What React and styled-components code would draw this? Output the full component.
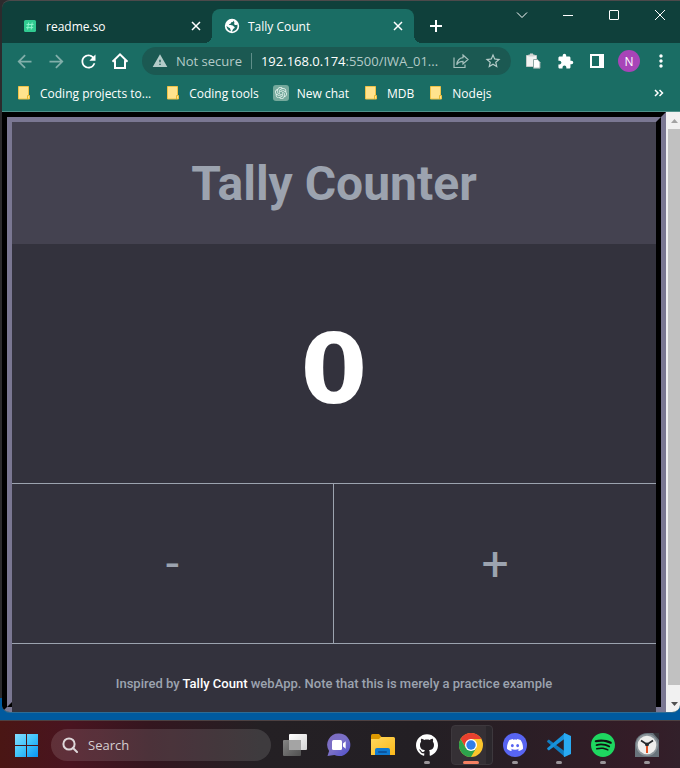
import React, { useState } from "react";
import styled, { createGlobalStyle } from "styled-components";
import {
  MdArrowBack,
  MdArrowForward,
  MdExtension,
  MdMoreVert,
  MdRefresh,
  MdStarBorder,
  MdWarning,
} from "react-icons/md";
import { SiDiscord, SiGithub, SiOpenai, SiSpotify } from "react-icons/si";

const UI_FONT = '"Open Sans", "Noto Sans", sans-serif';
const PAGE_FONT = 'Roboto, "Liberation Sans", sans-serif';

const GlobalStyle = createGlobalStyle`
  *, *::before, *::after { box-sizing: border-box; }
  html, body { margin: 0; height: 100%; overflow: hidden; }
  button, input { font: inherit; color: inherit; background: none; border: 0; padding: 0; margin: 0; }
  svg { display: block; flex: none; }
`;

const Desktop = styled.div`
  display: flex;
  flex-direction: column;
  height: 100vh;
  padding-left: 2px;
  background: linear-gradient(#2c2b2d 0 698px, #005a9e 698px);
  font-family: ${UI_FONT};
`;

const Window = styled.div`
  flex: 1;
  min-height: 0;
  display: flex;
  flex-direction: column;
  margin-bottom: 7px;
  border-top: 1px solid #4c4a4b;
  border-bottom: 1px solid #2d6c94;
  border-radius: 8px 0 8px 8px;
  overflow: hidden;
  background: #0f403b;
  color: #fff;
  font-size: 12px;
`;

/* Tab strip */
const TabStrip = styled.header`
  flex: none;
  display: flex;
  align-items: flex-end;
  height: 42px;
  padding-left: 8px;
`;

const Tab = styled.div`
  position: relative;
  display: flex;
  align-items: center;
  gap: 8px;
  width: 202px;
  height: 34px;
  padding: 0 8px 0 12px;
  border-radius: 8px 8px 0 0;
  background: ${(p) => (p.$active ? "#1a6d64" : "transparent")};

  &::before, &::after {
    content: ${(p) => (p.$active ? '""' : "none")};
    position: absolute;
    bottom: 0;
    width: 8px;
    height: 8px;
  }
  &::before { left: -8px; background: radial-gradient(circle at 0 0, transparent 8px, #1a6d64 8px); }
  &::after { right: -8px; background: radial-gradient(circle at 100% 0, transparent 8px, #1a6d64 8px); }
`;

const TabTitle = styled.span`
  flex: 1;
  white-space: nowrap;
`;

const IconButton = styled.button`
  flex: none;
  display: grid;
  place-items: center;
  width: ${(p) => p.$size || 24}px;
  height: ${(p) => p.$size || 24}px;
  opacity: ${(p) => (p.$dim ? 0.45 : 1)};
`;

const NewTab = styled(IconButton)`
  margin: 0 0 5px 10px;
`;

const WindowControls = styled.div`
  display: flex;
  gap: 6px;
  align-self: flex-start;
  margin-left: auto;
`;

const WindowButton = styled.button`
  display: grid;
  place-items: center;
  width: 40px;
  height: 28px;
`;

/* Toolbar */
const Toolbar = styled.nav`
  flex: none;
  display: flex;
  align-items: center;
  gap: 8px;
  height: 36px;
  padding: 0 7px 0 10px;
  background: #1a6d64;
`;

const Omnibox = styled.div`
  flex: 1;
  min-width: 0;
  display: flex;
  align-items: center;
  height: 28px;
  margin: 0 2px;
  padding: 0 6px 0 10px;
  border-radius: 14px;
  background: #1b5952;
  color: #b4cbc8;
  font-size: 13px;
`;

const Security = styled.span`
  margin-left: 8px;
  padding-right: 9px;
  border-right: 1px solid #5f8e89;
  line-height: 16px;
  white-space: nowrap;
`;

const Host = styled.label`
  padding-left: 9px;
  color: #fff;
`;

const Address = styled.input`
  flex: 1;
  min-width: 0;
  outline: 0;
  text-overflow: ellipsis;
`;

const OmniActions = styled.div`
  display: flex;
  gap: 8px;
`;

const Avatar = styled.button`
  flex: none;
  width: 22px;
  height: 22px;
  margin: 0 1px;
  border-radius: 50%;
  background: #a844b8;
  font-size: 12px;
`;

/* Bookmarks */
const Bookmarks = styled.nav`
  flex: none;
  display: flex;
  align-items: center;
  gap: 14px;
  height: 33px;
  padding: 0 9px 4px 14px;
  border-bottom: 1px solid #4f918a;
  background: #1a6d64;
`;

const Bookmark = styled.a`
  display: flex;
  align-items: center;
  gap: 8px;
  color: #fff;
  text-decoration: none;
  white-space: nowrap;
`;

const ChatBadge = styled.span`
  display: grid;
  place-items: center;
  width: 16px;
  height: 16px;
  border-radius: 3px;
  background: #75a99c;
`;

const Overflow = styled(IconButton)`
  margin-left: auto;
`;

/* Page */
const Viewport = styled.div`
  flex: 1;
  min-height: 0;
  display: flex;
`;

const OuterBevel = styled.main`
  flex: 1;
  min-width: 0;
  display: flex;
  border: 5px solid;
  border-color: #000 #7a7792 #7a7792 #000;
  font-family: ${PAGE_FONT};
  color: #9ca3af;
`;

const InnerBevel = styled.div`
  flex: 1;
  display: flex;
  border: 5px solid;
  border-color: #7a7792 #000 #000 #7a7792;
`;

const Counter = styled.div`
  flex: 1;
  display: flex;
  flex-direction: column;
  margin-bottom: -10px;
  background: #33323d;
`;

const Title = styled.h1`
  flex: none;
  margin: 0;
  padding: 34px 0 32px;
  background: #444250;
  font-size: 48px;
  line-height: 56px;
  font-weight: 700;
  text-align: center;
`;

const Value = styled.output`
  flex: 1;
  display: grid;
  place-items: center;
  padding-top: 12px;
  color: #fff;
  font-family: "DejaVu Sans", sans-serif;
  font-size: 96px;
  line-height: 112px;
  font-weight: 700;
`;

const Controls = styled.div`
  flex: none;
  display: grid;
  grid-template-columns: 1fr 1fr;
  height: 161px;
  border: solid #9ca3af;
  border-width: 1px 0;
`;

const Step = styled.button`
  font-size: 48px;
  line-height: 56px;

  &:first-child { border-right: 1px solid #9ca3af; }
`;

const Footnote = styled.footer`
  flex: none;
  padding: 30px 0 18px;
  font-size: 13px;
  line-height: 20px;
  font-weight: 500;
  text-align: center;

  a { color: #fff; text-decoration: none; }
`;

const ScrollTrack = styled.div`
  flex: none;
  display: flex;
  flex-direction: column;
  width: 14px;
  padding-left: 2px;
  background: #f1f1f1;
`;

const ScrollArrow = styled.button`
  display: grid;
  place-items: center;
  height: 17px;
`;

const ScrollThumb = styled.div`
  flex: 1;
  margin-bottom: 10px;
  background: #c1c1c1;
`;

/* Taskbar */
const Taskbar = styled.footer`
  flex: none;
  display: flex;
  align-items: center;
  height: 48px;
  margin-left: -2px;
  padding-left: 14px;
  border-top: 1px solid #4d4142;
  overflow: hidden;
  background: linear-gradient(90deg, #4a1614 0, #491420 70px, #34161f 150px, #242024 260px, #231f24 420px, #2a1e25 520px, #341c27 640px, #32202a 100%);
`;

const SearchBox = styled.label`
  flex: 1;
  display: flex;
  align-items: center;
  gap: 10px;
  height: 32px;
  margin: 0 2px 0 13px;
  padding-left: 11px;
  border-radius: 16px;
  background: rgba(255, 255, 255, 0.12);
  color: #d5ced0;
  font-size: 13px;

  input { flex: 1; min-width: 0; outline: 0; }
  input::placeholder { color: #d5ced0; opacity: 1; }
`;

const Apps = styled.div`
  flex: none;
  display: flex;
  padding-right: 11px;
`;

const AppButton = styled.button`
  position: relative;
  display: grid;
  place-items: center;
  width: 44px;
  height: 40px;

  &::before {
    content: ${(p) => (p.$active ? '""' : "none")};
    position: absolute;
    inset: 0 0 0 2px;
    border: 1px solid #3d383d;
    border-radius: 4px;
    background: linear-gradient(90deg, #353035 34px, #2b272c 34px);
  }
  &::after {
    content: ${(p) => (p.$running ? '""' : "none")};
    position: absolute;
    bottom: 1px;
    left: calc(50% - ${(p) => (p.$active ? 8 : 3)}px);
    width: ${(p) => (p.$active ? 16 : 6)}px;
    height: 3px;
    border-radius: 2px;
    background: ${(p) => (p.$active ? "#f58062" : "#9a9599")};
  }
  svg { position: relative; }
`;

const Line = ({ d, size = 12, width = 1 }) => (
  <svg width={size} height={size} viewBox={`0 0 ${size} ${size}`} fill="none" stroke="currentColor" strokeWidth={width}>
    <path d={d} />
  </svg>
);

const CloseGlyph = () => <Line size={10} width={1.5} d="M1 1l8 8M9 1l-8 8" />;

const ReadmeIcon = () => (
  <svg width="16" height="16" viewBox="0 0 16 16">
    <rect x="2" y="2" width="12" height="12" rx="1.500" fill="#31cb91" />
    <path d="M6.600 4.500l-1 7M10.200 4.500l-1 7M4.500 6.500h7M4.200 9.600h7" stroke="#8cf5cb" fill="none" />
  </svg>
);

const GlobeIcon = () => (
  <svg width="16" height="16" viewBox="0 0 16 16">
    <circle cx="8" cy="8" r="7.200" fill="#fff" />
    <path
      d="M9.600 2.500C9.200 4 8.100 4.100 7.200 4.300c-.5.500-.2 1.300-1 1.700-.6.300-1.200.3-1.200 1 2 .3 3.700-.2 4.400 1 .4.800 1.400.6 1.300 1.500-.2 1-1.300.9-1.700 1.700-.3.700-.5 1.500-1.200 2.300 3 .2 5.700-2.200 5.700-5.500 0-.5-.1-1-.2-1.500-1 .7-2.200.8-2.900 0-.7-.9.300-1.700-.1-2.400-.3-.5-.7-.9-.7-1.600zM2.500 7.800c0 2.500 1.800 4.800 4.200 5.400.3-1-.4-1.700-.5-2.500-.1-1-.9-1-1.600-1.300-.9-.4-1.400-.8-2.100-1.600z"
      fill="#1a6d64"
    />
  </svg>
);

const HomeIcon = () => (
  <svg width="18" height="18" viewBox="0 0 18 18" fill="none" stroke="currentColor" strokeWidth="2">
    <path d="M1.500 9.700L9 2.400l7.500 7.300M4 8.200V16h10V8.200" />
  </svg>
);

const ShareIcon = () => (
  <svg width="16" height="16" viewBox="0 0 16 16" fill="none" stroke="#a6c0bd" strokeWidth="1.200">
    <path d="M1 4.500v10h11v-3" />
    <path d="M10 2l5 4.500-5 4.500V8.400C7.200 8.400 5 9.400 3.700 11.700 4.200 7.600 6.400 5 10 4.600z" />
  </svg>
);

const PasteIcon = () => (
  <svg width="16" height="16" viewBox="0 0 16 16">
    <path d="M1.500 2.500h10v11h-10z" fill="#f1f3f2" stroke="#c3c9c7" />
    <path d="M3.500 3.500v-2H5V.5h3v1h1.500v2z" fill="#cfd3d1" />
    <path d="M8.500 6.500h4l2.500 2.700v6H8.500z" fill="#fff" stroke="#8fa8a4" />
  </svg>
);

const SidePanelIcon = () => (
  <svg width="14" height="14" viewBox="0 0 14 14">
    <path fill="#fff" fillRule="evenodd" d="M0 0h14v14H0zM2 2v10h7V2z" />
  </svg>
);

const FolderIcon = () => (
  <svg width="16" height="16" viewBox="0 0 16 16">
    <path d="M2.500 1.500h10v9h1v3.500H2.500z" fill="#ffe38d" stroke="#efc247" />
    <path d="M11.500 14v-3.500H13" fill="none" stroke="#e8b931" />
  </svg>
);

const WindowsIcon = () => (
  <svg width="24" height="24" viewBox="0 0 24 24">
    <defs>
      <linearGradient id="win" x1="0" y1="0" x2="1" y2="1">
        <stop offset="0" stopColor="#85dcff" />
        <stop offset=".5" stopColor="#40c4fb" />
        <stop offset="1" stopColor="#0894f5" />
      </linearGradient>
    </defs>
    <path fill="url(#win)" d="M1 1h11v11H1zM13 1h11v11H13zM1 13h11v11H1zM13 13h11v11H13z" />
  </svg>
);

const SearchIcon = () => (
  <svg width="16" height="16" viewBox="0 0 16 16" fill="none" stroke="#ded7d9" strokeWidth="2">
    <circle cx="7" cy="7" r="5.600" />
    <path d="M11 11l4 4" strokeLinecap="round" />
  </svg>
);

const TaskViewIcon = () => (
  <svg width="24" height="24" viewBox="0 0 24 24">
    <defs>
      <linearGradient id="tvb" x1="0" y1="0" x2="1" y2="1">
        <stop offset="0" stopColor="#fff" />
        <stop offset="1" stopColor="#d4d4d4" />
      </linearGradient>
      <linearGradient id="tvf" x1="0" y1="0" x2="1" y2="1">
        <stop offset="0" stopColor="#858585" />
        <stop offset="1" stopColor="#505050" />
      </linearGradient>
    </defs>
    <rect x="6" y="1" width="18" height="16" rx="1" fill="url(#tvb)" />
    <rect x="0" y="7" width="18" height="16" rx="1" fill="url(#tvf)" />
    <rect x="6" y="7" width="12" height="10" fill="#a4a4a4" />
  </svg>
);

const ChatIcon = () => (
  <svg width="24" height="24" viewBox="0 0 24 24">
    <defs>
      <linearGradient id="chat" x1="0" y1="0" x2="1" y2="1">
        <stop offset="0" stopColor="#7d6bbd" />
        <stop offset=".5" stopColor="#7a70c8" />
        <stop offset="1" stopColor="#4c4dcc" />
      </linearGradient>
    </defs>
    <path d="M12 .5a11.300 11.300 0 1 1-4.600 21.600L.5 23l1.600-5A11.300 11.300 0 0 1 12 .5z" fill="url(#chat)" />
    <rect x="5" y="7" width="10" height="10" rx="1.500" fill="#fff" />
    <path d="M16 10.500l2.700-2.300v7.600L16 13.500z" fill="#fff" />
  </svg>
);

const ExplorerIcon = () => (
  <svg width="24" height="24" viewBox="0 0 24 24">
    <defs>
      <linearGradient id="fold" x1="0" y1="0" x2="1" y2="1">
        <stop offset="0" stopColor="#ffd95e" />
        <stop offset="1" stopColor="#fbb81a" />
      </linearGradient>
    </defs>
    <path d="M0 2.500Q0 1 1.500 1H8l2.500 3v4H0z" fill="#dc9800" />
    <path d="M0 6h8l2-2h12.500Q24 4 24 5.500V22H0z" fill="url(#fold)" />
    <path d="M4 22v-5q0-2 2-2h11q2 0 2 2v5z" fill="#0f7ad0" />
    <rect x="7" y="18" width="9" height="2" rx="1" fill="#0b559f" />
  </svg>
);

const ChromeIcon = () => (
  <svg width="24" height="24" viewBox="0 0 24 24">
    <circle cx="12" cy="12" r="12" fill="#fbc52c" />
    <path d="M12 6h10.400A12 12 0 0 0 1.600 6L7 15z" fill="#e8402f" />
    <path d="M1.600 6A12 12 0 0 0 12 24l5.200-9L12 12 6.800 15z" fill="#2da34c" />
    <circle cx="12" cy="12" r="6" fill="#fff" />
    <circle cx="12" cy="12" r="4.700" fill="#2f7de9" />
  </svg>
);

const DiscordIcon = () => (
  <svg width="24" height="24" viewBox="0 0 24 24">
    <circle cx="12" cy="12" r="12" fill="#5865f2" />
    <SiDiscord x="4" y="4" size={16} color="#fff" />
  </svg>
);

const CodeIcon = () => (
  <svg width="24" height="24" viewBox="0 0 24 24">
    <path d="M0 8l1.800-1.500L18 18.500V24L.3 9z" fill="#0f7cc0" />
    <path d="M0 16l1.800 1.500L18 5.500V0L.3 15z" fill="#1793dc" />
    <path d="M17.500 0L24 3v18l-6.500 3q-.7 0-.7-1V1q0-1 .7-1z" fill="#29aaf3" />
  </svg>
);

const SpotifyIcon = () => (
  <svg width="24" height="24" viewBox="0 0 24 24">
    <circle cx="12" cy="12" r="11" fill="#111" />
    <SiSpotify size={24} color="#1ed760" />
  </svg>
);

const ClockIcon = () => (
  <svg width="24" height="24" viewBox="0 0 24 24">
    <path d="M0 12A12 12 0 0 1 12 0h9q3 0 3 4v20H0z" fill="#68737b" />
    <path d="M18 0h6v7z" fill="#353238" />
    <circle cx="12" cy="12" r="11" fill="#8e979c" />
    <circle cx="12" cy="12" r="9.300" fill="#eeeeec" />
    <path d="M6 7.500l6 4 6-4" fill="none" stroke="#25292c" strokeWidth="1.800" />
    <circle cx="12" cy="11.500" r="2" fill="#25292c" />
    <path d="M12 13v7" stroke="#e25425" strokeWidth="2" />
  </svg>
);

const BOOKMARKS = [
  { label: "Coding projects to...", icon: <FolderIcon /> },
  { label: "Coding tools", icon: <FolderIcon /> },
  { label: "New chat", icon: <ChatBadge><SiOpenai size={12} color="#e6f4ef" /></ChatBadge> },
  { label: "MDB", icon: <FolderIcon /> },
  { label: "Nodejs", icon: <FolderIcon /> },
];

const APPS = [
  { name: "Task view", icon: <TaskViewIcon /> },
  { name: "Chat", icon: <ChatIcon /> },
  { name: "File Explorer", icon: <ExplorerIcon /> },
  { name: "GitHub", icon: <SiGithub size={22} color="#fff" />, running: true },
  { name: "Chrome", icon: <ChromeIcon />, running: true, active: true },
  { name: "Discord", icon: <DiscordIcon />, running: true },
  { name: "Visual Studio Code", icon: <CodeIcon />, running: true },
  { name: "Spotify", icon: <SpotifyIcon />, running: true },
  { name: "Clock", icon: <ClockIcon />, running: true },
];

export default function App() {
  const [count, setCount] = useState(0);

  return (
    <Desktop>
      <GlobalStyle />
      <Window>
        <TabStrip>
          <Tab>
            <ReadmeIcon />
            <TabTitle>readme.so</TabTitle>
            <IconButton $size={16} aria-label="Close readme.so"><CloseGlyph /></IconButton>
          </Tab>
          <Tab $active>
            <GlobeIcon />
            <TabTitle>Tally Count</TabTitle>
            <IconButton $size={16} aria-label="Close Tally Count"><CloseGlyph /></IconButton>
          </Tab>
          <NewTab aria-label="New tab"><Line size={12} width={2} d="M6 0v12M0 6h12" /></NewTab>
          <WindowControls>
            <WindowButton aria-label="Search tabs"><Line d="M1 3.500l5 5 5-5" /></WindowButton>
            <WindowButton aria-label="Minimize"><Line d="M1 6.500h10" /></WindowButton>
            <WindowButton aria-label="Maximize"><Line d="M2 1.500h8q.5 0 .5.5v8q0 .5-.5.5H2q-.5 0-.5-.5V2q0-.5.5-.5z" /></WindowButton>
            <WindowButton aria-label="Close"><Line d="M1 1l10 10M11 1L1 11" /></WindowButton>
          </WindowControls>
        </TabStrip>

        <Toolbar aria-label="Browser">
          <IconButton $dim aria-label="Back"><MdArrowBack size={21} /></IconButton>
          <IconButton $dim aria-label="Forward"><MdArrowForward size={21} /></IconButton>
          <IconButton aria-label="Reload"><MdRefresh size={21} /></IconButton>
          <IconButton aria-label="Home"><HomeIcon /></IconButton>
          <Omnibox>
            <MdWarning size={16} />
            <Security>Not secure</Security>
            <Host htmlFor="address">192.168.0.174</Host>
            <Address id="address" defaultValue=":5500/IWA_01..." />
            <OmniActions>
              <IconButton aria-label="Share"><ShareIcon /></IconButton>
              <IconButton aria-label="Bookmark this page"><MdStarBorder size={18} /></IconButton>
            </OmniActions>
          </Omnibox>
          <IconButton aria-label="Clipboard"><PasteIcon /></IconButton>
          <IconButton aria-label="Extensions"><MdExtension size={17} /></IconButton>
          <IconButton aria-label="Side panel"><SidePanelIcon /></IconButton>
          <Avatar>N</Avatar>
          <IconButton aria-label="Menu"><MdMoreVert size={20} /></IconButton>
        </Toolbar>

        <Bookmarks aria-label="Bookmarks">
          {BOOKMARKS.map((b) => (
            <Bookmark key={b.label} href="#">{b.icon}{b.label}</Bookmark>
          ))}
          <Overflow aria-label="More bookmarks"><Line size={10} width={1.5} d="M1 2l3 3-3 3M5.500 2l3 3-3 3" /></Overflow>
        </Bookmarks>

        <Viewport>
          <OuterBevel>
            <InnerBevel>
              <Counter>
                <Title>Tally Counter</Title>
                <Value>{count}</Value>
                <Controls>
                  <Step onClick={() => setCount(count - 1)}>-</Step>
                  <Step onClick={() => setCount(count + 1)}>+</Step>
                </Controls>
                <Footnote>
                  Inspired by <a href="#">Tally Count</a> webApp. Note that this is merely a practice example
                </Footnote>
              </Counter>
            </InnerBevel>
          </OuterBevel>
          <ScrollTrack>
            <ScrollArrow aria-label="Scroll up">
              <svg width="7" height="4" viewBox="0 0 7 4"><path d="M0 4l3.500-4L7 4z" fill="#a3a3a3" /></svg>
            </ScrollArrow>
            <ScrollThumb />
            <ScrollArrow aria-label="Scroll down">
              <svg width="7" height="4" viewBox="0 0 7 4"><path d="M0 0l3.500 4L7 0z" fill="#505050" /></svg>
            </ScrollArrow>
          </ScrollTrack>
        </Viewport>
      </Window>

      <Taskbar>
        <IconButton aria-label="Start"><WindowsIcon /></IconButton>
        <SearchBox>
          <SearchIcon />
          <input type="text" placeholder="Search" aria-label="Search" />
        </SearchBox>
        <Apps>
          {APPS.map((a) => (
            <AppButton key={a.name} aria-label={a.name} $running={a.running} $active={a.active}>{a.icon}</AppButton>
          ))}
        </Apps>
      </Taskbar>
    </Desktop>
  );
}
